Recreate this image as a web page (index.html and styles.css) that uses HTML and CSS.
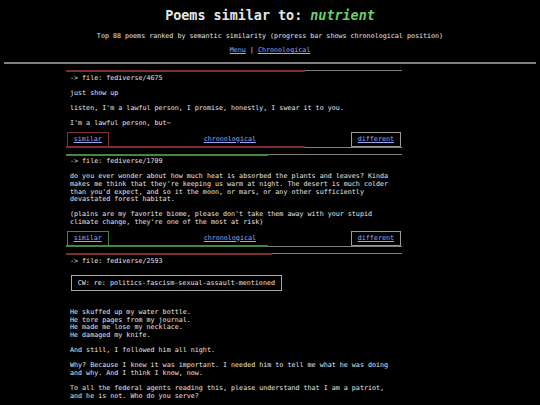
FILE: index.html
```html
<!DOCTYPE html>
<html lang="en">
<head>
  <meta charset="UTF-8" />
  <meta name="viewport" content="width=device-width, initial-scale=1.0"/>
  <title>Poems similar to: nutrient</title>
  <link rel="stylesheet" href="styles.css">
</head>
<body>

<div class="header">
  <h1>Poems similar to: <em>nutrient</em></h1>
  <p class="subtitle">Top 88 poems ranked by semantic similarity (progress bar shows chronological position)</p>
  <p class="nav"><a href="#">Menu</a> | <a href="#">Chronological</a></p>
</div>
<hr>

<div class="poems">

  <div class="poem red">
    <div class="bar"><span class="fill" style="width: 71.1%"></span><span class="rest"></span></div>
    <div class="poem-body">
      <div class="file">-&gt; file: fediverse/4675</div>
      <pre class="text">just show up

listen, I'm a lawful person, I promise, honestly, I swear it to you.

I'm a lawful person, but~</pre>
    </div>
    <div class="actions">
      <a href="#" class="box similar">similar</a>
      <a href="#">chronological</a>
      <a href="#" class="box">different</a>
    </div>
    <div class="bar"><span class="fill" style="width: 71.1%"></span><span class="rest"></span></div>
  </div>

  <div class="poem green">
    <div class="bar"><span class="fill" style="width: 60.1%"></span><span class="rest"></span></div>
    <div class="poem-body">
      <div class="file">-&gt; file: fediverse/1709</div>
      <pre class="text">do you ever wonder about how much heat is absorbed the plants and leaves? Kinda makes me think that they're keeping us warm at night. The desert is much colder than you'd expect, and so it the moon, or mars, or any other sufficiently devastated forest habitat.

(plains are my favorite biome, please don't take them away with your stupid climate change, they're one of the most at risk)</pre>
    </div>
    <div class="actions">
      <a href="#" class="box similar">similar</a>
      <a href="#">chronological</a>
      <a href="#" class="box">different</a>
    </div>
    <div class="bar"><span class="fill" style="width: 60.1%"></span><span class="rest"></span></div>
  </div>

  <div class="poem red">
    <div class="bar"><span class="fill" style="width: 61.2%"></span><span class="rest"></span></div>
    <div class="poem-body">
      <div class="file">-&gt; file: fediverse/2593</div>
      <div class="cw">CW: re: politics-fascism-sexual-assault-mentioned</div>
      <pre class="text">He skuffed up my water bottle.
He tore pages from my journal.
He made me lose my necklace.
He damaged my knife.

And still, I followed him all night.

Why? Because I knew it was important. I needed him to tell me what he was doing and why. And I think I know, now.

To all the federal agents reading this, please understand that I am a patriot, and he is not. Who do you serve?</pre>
    </div>
  </div>

</div>

</body>
</html>
```

FILE: styles.css
```css
* {
  box-sizing: border-box;
  margin: 0;
  padding: 0;
}

body {
  margin: 0 4px;
  background-color: #000;
  color: #e6e6e6;
  font-family: "DejaVu Sans Mono", monospace;
  font-size: 6.7px;
  line-height: 7.6px;
}

a {
  color: #9aa8f0;
}

.header {
  text-align: center;
  padding-top: 8px;
}

.header h1 {
  font-size: 13.4px;
  line-height: 16px;
}

.header h1 em {
  color: #6ccf6c;
}

.subtitle {
  margin-top: 9.2px;
}

.nav {
  margin-top: 6.4px;
}

hr {
  border: 0;
  border-top: 2px solid #808080;
  margin-top: 7px;
}

.poems {
  width: 336px;
  margin: 6.2px 0 0 62px;
}

.poem + .poem {
  margin-top: 5.7px;
}

.bar {
  display: flex;
  align-items: center;
  height: 2px;
}

.bar .fill {
  height: 2px;
}

.bar .rest {
  flex: 1;
  height: 1px;
  background-color: #808080;
}

.red .fill {
  background-color: #7d2e2e;
}

.green .fill {
  background-color: #3f8a3f;
}

.poem-body {
  padding: 2.6px 4px 0;
}

.text {
  margin-top: 7.4px;
  white-space: pre-wrap;
  font: inherit;
}

.cw {
  display: inline-block;
  border: 1px solid #aaa;
  padding: 3.2px 5.7px;
  margin: 10.3px 0 0 1px;
}

.cw + .text {
  margin-top: 17.8px;
}

.actions {
  display: flex;
  justify-content: space-between;
  align-items: center;
  margin: 4.1px 1px -1px 0.7px;
}

.actions .box {
  border: 1px solid #999;
  padding: 3px 6px;
}

.red .actions .similar {
  border-color: #7d2e2e;
}

.green .actions .similar {
  border-color: #3f8a3f;
}
```
